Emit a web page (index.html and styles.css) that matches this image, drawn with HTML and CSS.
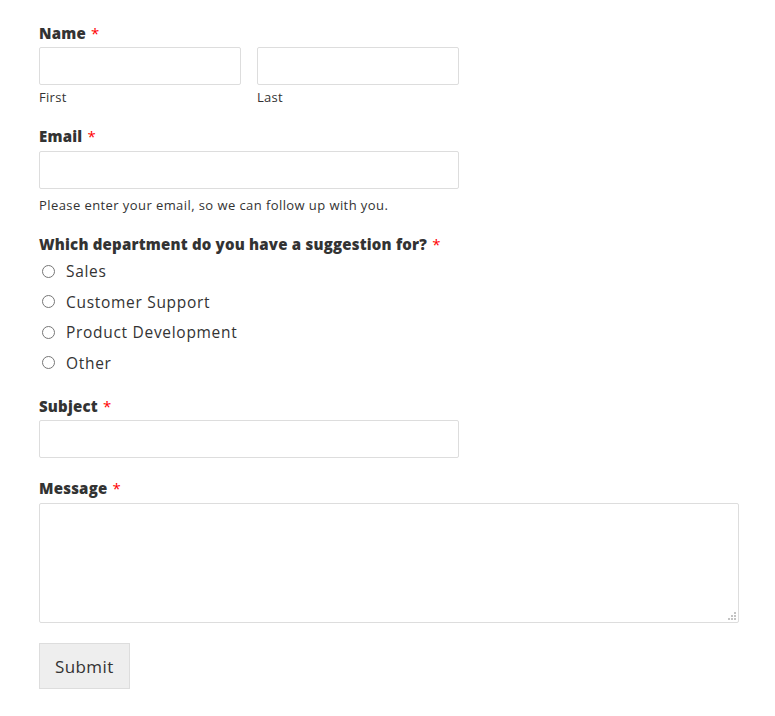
FILE: index.html
```html
<!DOCTYPE html>
<html>
<head>
<meta charset="utf-8">
<link rel="stylesheet" href="styles.css">
</head>
<body>
<form class="form">
  <div class="field">
    <div class="label">Name <span class="req">*</span></div>
    <div class="name-row">
      <div class="name-col">
        <input class="input" type="text">
        <div class="sublabel">First</div>
      </div>
      <div class="name-col">
        <input class="input" type="text">
        <div class="sublabel">Last</div>
      </div>
    </div>
  </div>
  <div class="field field-email">
    <div class="label">Email <span class="req">*</span></div>
    <input class="input half" type="email">
    <div class="help">Please enter your email, so we can follow up with you.</div>
  </div>
  <div class="field field-radio">
    <div class="label">Which department do you have a suggestion for? <span class="req">*</span></div>
    <div class="radios">
      <label class="radio"><input type="radio" name="dep"><span>Sales</span></label>
      <label class="radio"><input type="radio" name="dep"><span>Customer Support</span></label>
      <label class="radio"><input type="radio" name="dep"><span>Product Development</span></label>
      <label class="radio"><input type="radio" name="dep"><span>Other</span></label>
    </div>
  </div>
  <div class="field">
    <div class="label">Subject <span class="req">*</span></div>
    <input class="input half" type="text">
  </div>
  <div class="field field-message">
    <div class="label">Message <span class="req">*</span></div>
    <div class="textarea-wrap">
      <textarea class="textarea"></textarea>
      <svg class="grip" width="8" height="8" viewBox="0 0 8 8" aria-hidden="true">
        <rect x="6" y="0" width="2" height="2"/>
        <rect x="3" y="3" width="2" height="2"/>
        <rect x="6" y="3" width="2" height="2"/>
        <rect x="0" y="6" width="2" height="2"/>
        <rect x="3" y="6" width="2" height="2"/>
        <rect x="6" y="6" width="2" height="2"/>
      </svg>
    </div>
  </div>
  <div class="actions">
    <button class="submit" type="button">Submit</button>
  </div>
</form>
</body>
</html>
```
FILE: styles.css
```css
html, body {
  margin: 0;
  padding: 0;
  background: #fff;
}
body {
  font-family: "Open Sans", "DejaVu Sans", sans-serif;
  color: #333;
}
.form {
  width: 700px;
  padding: 23px 0 0 39px;
  display: flex;
  flex-direction: column;
}
.field {
  display: flex;
  flex-direction: column;
  align-items: flex-start;
  margin-bottom: 20px;
}
.label {
  font-size: 15px;
  font-weight: 800;
  line-height: 20px;
  margin-bottom: 4px;
  letter-spacing: 0.2px;
  color: #333;
}
.field-email .label,
.field-message .label {
  margin-bottom: 5px;
}
.req {
  color: #f00;
  font-weight: 400;
  margin-left: 1px;
}
.name-row {
  display: flex;
  gap: 16px;
  width: 420px;
}
.name-col {
  display: flex;
  flex-direction: column;
  width: 202px;
}
.input {
  box-sizing: border-box;
  height: 38px;
  width: 100%;
  border: 1px solid #ddd;
  border-radius: 2px;
  background: #fff;
  margin: 0;
  padding: 0 8px;
}
.input.half {
  width: 420px;
}
.sublabel {
  font-size: 13px;
  line-height: 18px;
  margin-top: 3px;
  letter-spacing: 0.3px;
}
.help {
  font-size: 13px;
  line-height: 18px;
  margin-top: 7px;
  letter-spacing: 0.42px;
}
.field-radio {
  margin-bottom: 18px;
}
.radios {
  display: flex;
  flex-direction: column;
  margin-top: -2px;
}
.radio {
  display: flex;
  align-items: center;
  height: 30.5px;
  font-size: 15.5px;
  letter-spacing: 0.7px;
}
.radio input {
  margin: 0 11px 0 3px;
  width: 13px;
  height: 13px;
}
.textarea-wrap {
  position: relative;
  width: 700px;
  height: 120px;
}
.textarea {
  display: block;
  box-sizing: border-box;
  width: 700px;
  height: 120px;
  border: 1px solid #ddd;
  border-radius: 2px;
  margin: 0;
  resize: none;
}
.grip {
  position: absolute;
  right: 3px;
  bottom: 3px;
  fill: #c4c4c4;
}
.actions {
  display: flex;
}
.submit {
  box-sizing: border-box;
  height: 46px;
  padding: 0 15px;
  background: #eee;
  border: 1px solid #ddd;
  border-radius: 0;
  font-family: inherit;
  font-size: 17px;
  letter-spacing: 0.4px;
  color: #333;
}
```
